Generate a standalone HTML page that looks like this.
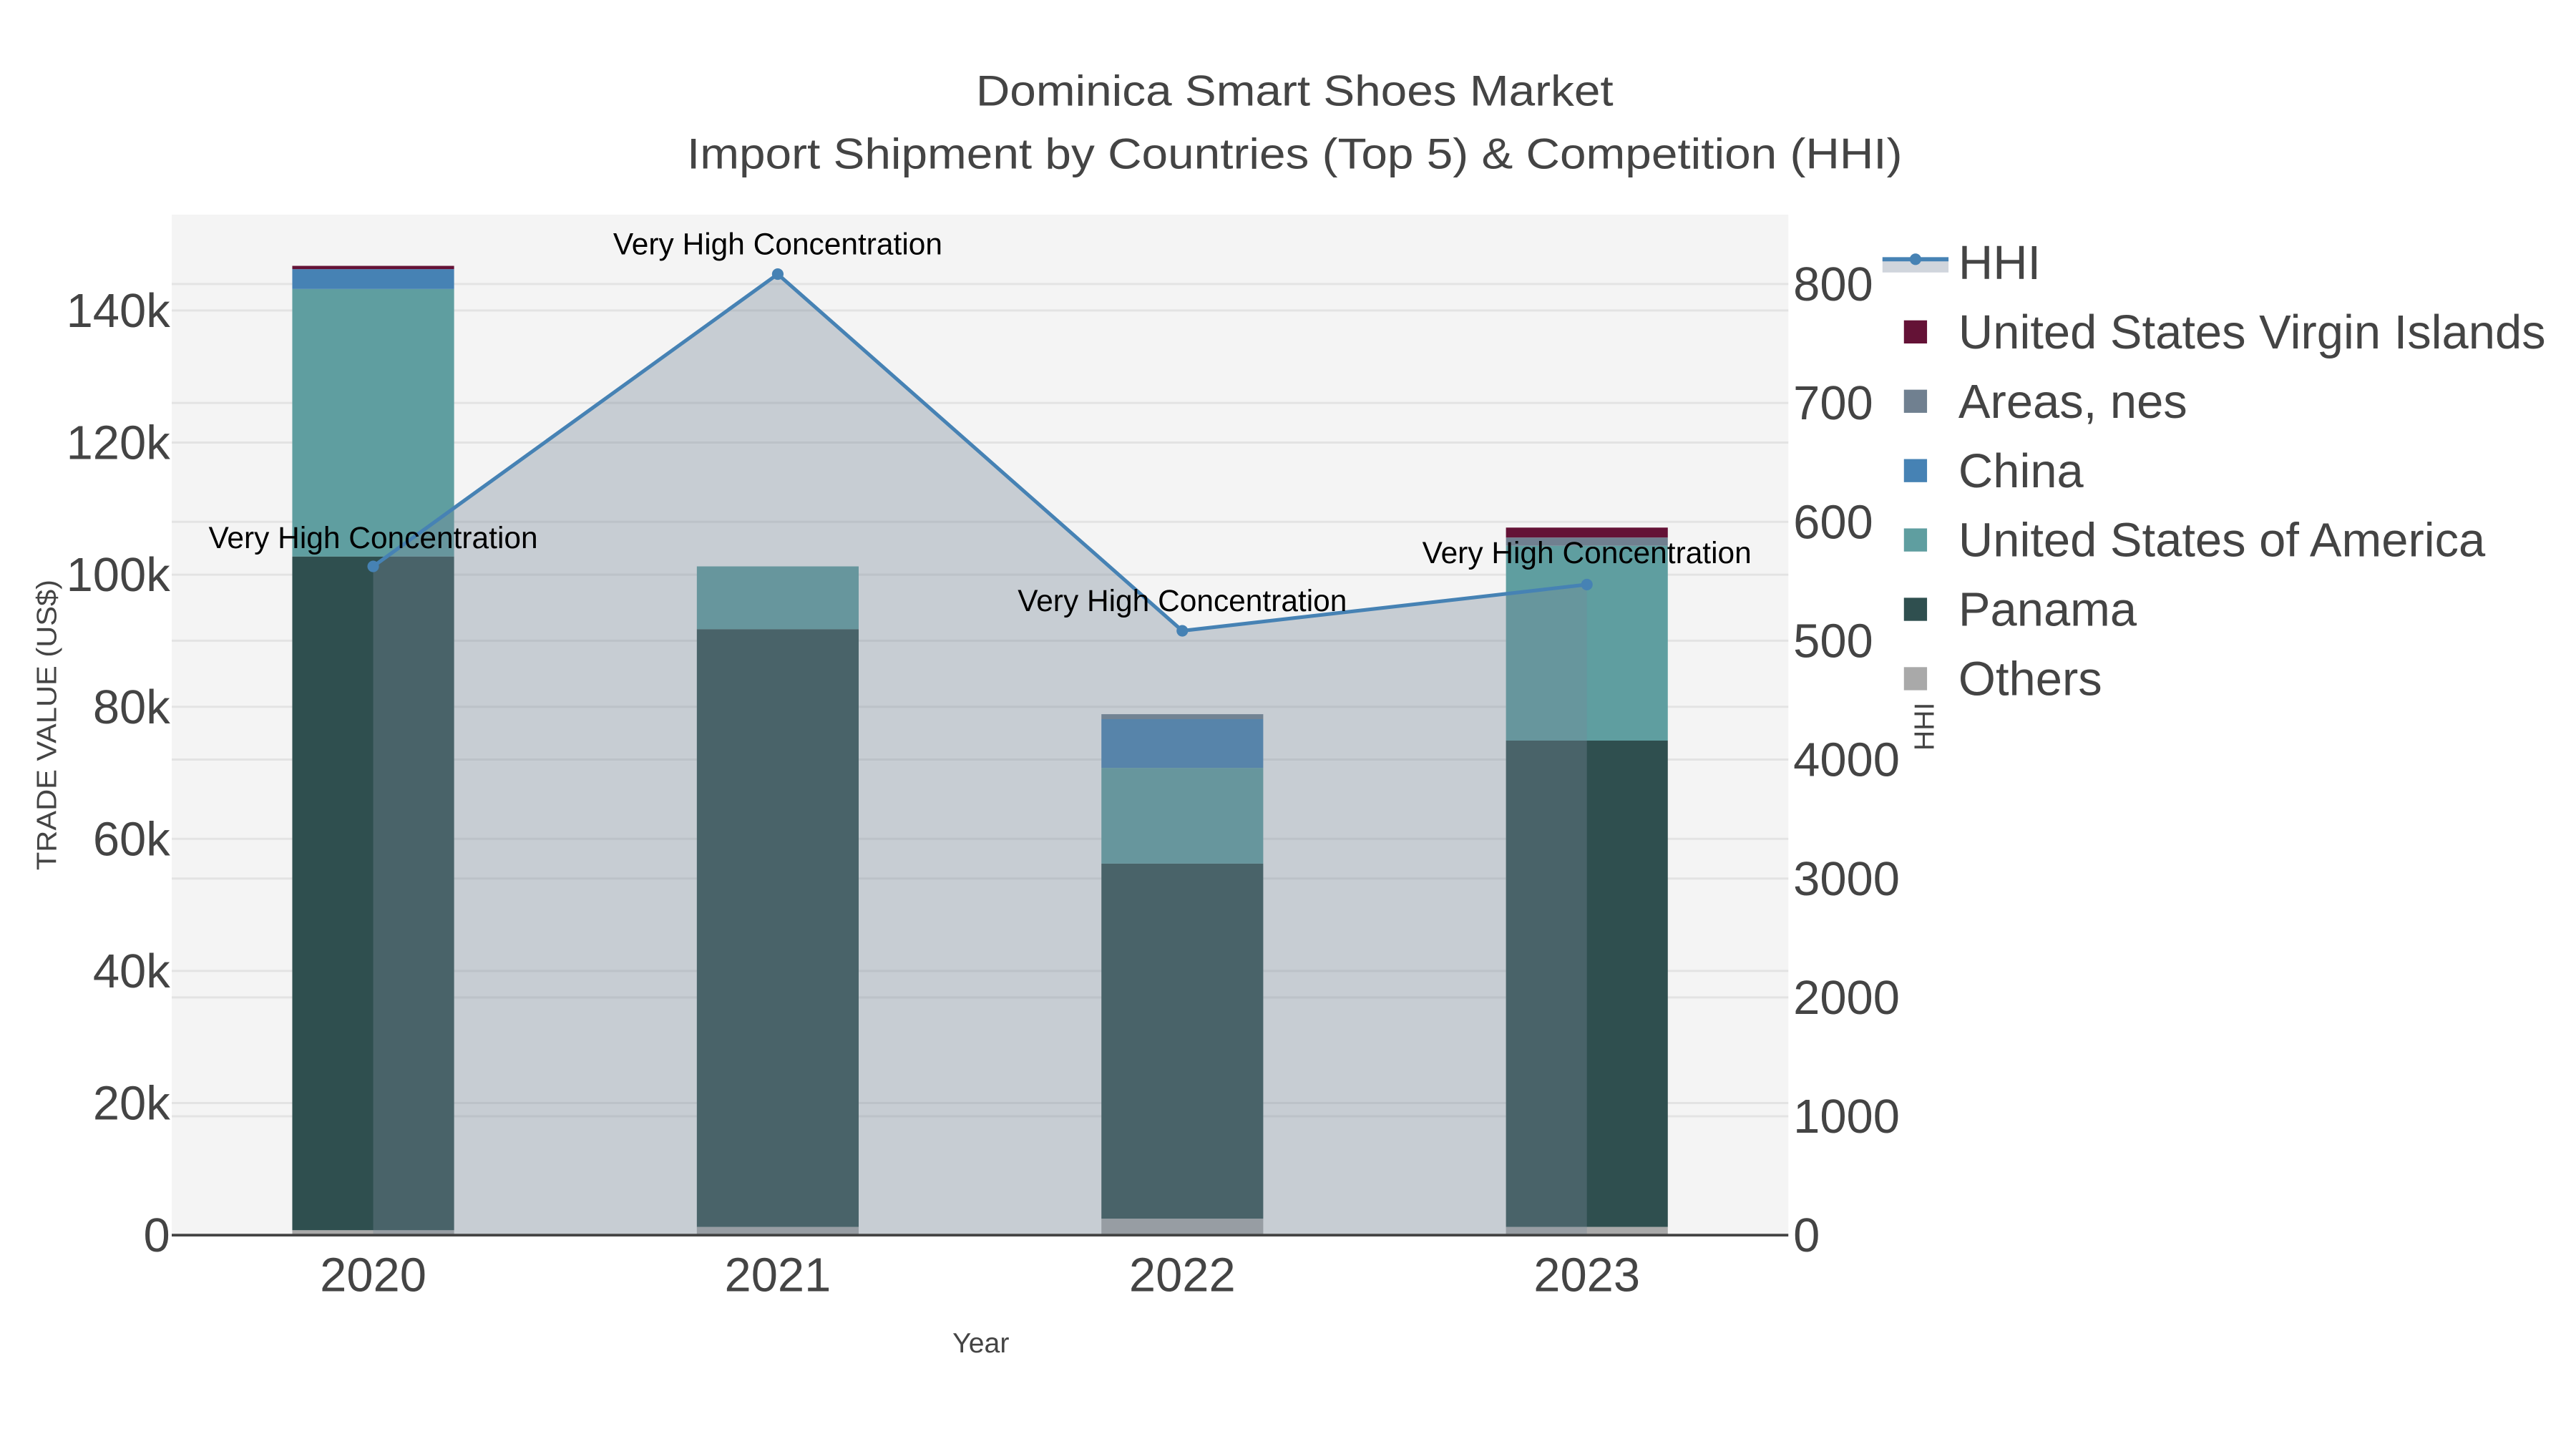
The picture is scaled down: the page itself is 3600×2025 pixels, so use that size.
<!DOCTYPE html>
<html><head><meta charset="utf-8"><style>
html,body{margin:0;padding:0;background:#fff;}
svg{display:block;}
text{font-family:"Liberation Sans",sans-serif;}
</style></head><body>
<svg width="3600" height="2025" viewBox="0 0 1560 877.5" xmlns="http://www.w3.org/2000/svg">
<rect x="0" y="0" width="1560" height="877.5" fill="#fff"/>
<rect x="104" y="130" width="979" height="618" fill="#f4f4f4"/>
<g stroke="#e3e3e3" stroke-width="1.3">
<line x1="104" x2="1083" y1="668" y2="668"/><line x1="104" x2="1083" y1="588" y2="588"/>
<line x1="104" x2="1083" y1="508" y2="508"/><line x1="104" x2="1083" y1="428" y2="428"/>
<line x1="104" x2="1083" y1="348" y2="348"/><line x1="104" x2="1083" y1="268" y2="268"/>
<line x1="104" x2="1083" y1="188" y2="188"/>
<line x1="104" x2="1083" y1="676" y2="676"/><line x1="104" x2="1083" y1="604" y2="604"/>
<line x1="104" x2="1083" y1="532" y2="532"/><line x1="104" x2="1083" y1="460" y2="460"/>
<line x1="104" x2="1083" y1="388" y2="388"/><line x1="104" x2="1083" y1="316" y2="316"/>
<line x1="104" x2="1083" y1="244" y2="244"/><line x1="104" x2="1083" y1="172" y2="172"/>
</g>
<g>
<rect x="177" y="745" width="98" height="3" fill="#a9a9a9"/>
<rect x="177" y="337" width="98" height="408" fill="#2f4f4f"/>
<rect x="177" y="175" width="98" height="162" fill="#5f9ea0"/>
<rect x="177" y="163" width="98" height="12" fill="#4682b4"/>
<rect x="177" y="161" width="98" height="2" fill="#641236"/>
<rect x="422" y="743" width="98" height="5" fill="#a9a9a9"/>
<rect x="422" y="381" width="98" height="362" fill="#2f4f4f"/>
<rect x="422" y="343" width="98" height="38" fill="#5f9ea0"/>
<rect x="667" y="738" width="98" height="10" fill="#a9a9a9"/>
<rect x="667" y="523" width="98" height="215" fill="#2f4f4f"/>
<rect x="667" y="465" width="98" height="58" fill="#5f9ea0"/>
<rect x="667" y="435.5" width="98" height="29.5" fill="#4682b4"/>
<rect x="667" y="432.5" width="98" height="3" fill="#708090"/>
<rect x="912" y="743" width="98" height="5" fill="#a9a9a9"/>
<rect x="912" y="448.5" width="98" height="294.5" fill="#2f4f4f"/>
<rect x="912" y="330.5" width="98" height="118" fill="#5f9ea0"/>
<rect x="912" y="325.5" width="98" height="5" fill="#708090"/>
<rect x="912" y="319.5" width="98" height="6" fill="#641236"/>
</g>
<polygon points="226,343 471,166 716,382 961,354 961,748 226,748" fill="rgba(119,136,153,0.36)"/>
<line x1="104" x2="1083" y1="748" y2="748" stroke="#444" stroke-width="1.6"/>
<polyline points="226,343 471,166 716,382 961,354" fill="none" stroke="#4682b4" stroke-width="2.2"/>
<g fill="#4682b4"><circle cx="226" cy="343" r="3.5"/><circle cx="471" cy="166" r="3.5"/><circle cx="716" cy="382" r="3.5"/><circle cx="961" cy="354" r="3.5"/></g>
<g font-size="18.4" fill="#000" text-anchor="middle">
<text x="226" y="332">Very High Concentration</text>
<text x="471" y="154">Very High Concentration</text>
<text x="716" y="370">Very High Concentration</text>
<text x="961" y="341">Very High Concentration</text>
</g>
<g fill="#444" text-anchor="middle">
<text x="784" y="64" font-size="26" textLength="386" lengthAdjust="spacingAndGlyphs">Dominica Smart Shoes Market</text>
<text x="784" y="102" font-size="26" textLength="736" lengthAdjust="spacingAndGlyphs">Import Shipment by Countries (Top 5) &amp; Competition (HHI)</text>
</g>
<g fill="#444" font-size="29" text-anchor="end">
<text x="103" y="758">0</text><text x="103" y="678">20k</text><text x="103" y="598">40k</text>
<text x="103" y="518">60k</text><text x="103" y="438">80k</text><text x="103" y="358">100k</text>
<text x="103" y="278">120k</text><text x="103" y="198">140k</text>
</g>
<g fill="#444" font-size="29" text-anchor="start">
<text x="1086" y="758">0</text><text x="1086" y="686">1000</text><text x="1086" y="614">2000</text>
<text x="1086" y="542">3000</text><text x="1086" y="470">4000</text><text x="1086" y="398">500</text>
<text x="1086" y="326">600</text><text x="1086" y="254">700</text><text x="1086" y="182">800</text>
</g>
<g fill="#444" font-size="29" text-anchor="middle">
<text x="226" y="782">2020</text><text x="471" y="782">2021</text><text x="716" y="782">2022</text><text x="961" y="782">2023</text>
</g>
<text x="594" y="819" font-size="17" fill="#444" text-anchor="middle">Year</text>
<text transform="translate(34,439) rotate(-90)" font-size="17" fill="#444" text-anchor="middle" textLength="176" lengthAdjust="spacingAndGlyphs">TRADE VALUE (US$)</text>
<text transform="translate(1171,440) rotate(-90)" font-size="17" fill="#444" text-anchor="middle">HHI</text>
<rect x="1140" y="157" width="40" height="8" fill="#d0d5dc"/>
<line x1="1140" x2="1180" y1="157" y2="157" stroke="#4682b4" stroke-width="2.5"/>
<circle cx="1160" cy="157" r="3.5" fill="#4682b4"/>
<g>
<rect x="1153" y="194" width="14" height="14" fill="#641236"/>
<rect x="1153" y="236" width="14" height="14" fill="#708090"/>
<rect x="1153" y="278" width="14" height="14" fill="#4682b4"/>
<rect x="1153" y="320" width="14" height="14" fill="#5f9ea0"/>
<rect x="1153" y="362" width="14" height="14" fill="#2f4f4f"/>
<rect x="1153" y="404" width="14" height="14" fill="#a9a9a9"/>
</g>
<g fill="#444" font-size="29">
<text x="1186" y="169">HHI</text>
<text x="1186" y="211">United States Virgin Islands</text>
<text x="1186" y="253">Areas, nes</text>
<text x="1186" y="295">China</text>
<text x="1186" y="337">United States of America</text>
<text x="1186" y="379">Panama</text>
<text x="1186" y="421">Others</text>
</g>
</svg>
</body></html>
